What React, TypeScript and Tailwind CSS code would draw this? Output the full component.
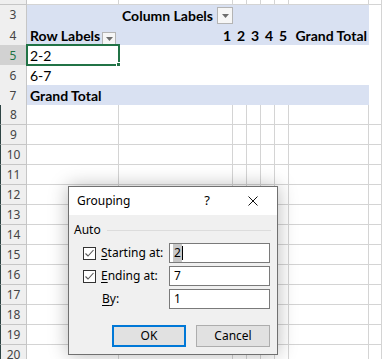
import React from 'react';

const ROWS = [2, 3, 4, 5, 6, 7, 8, 9, 10, 11, 12, 13, 14, 15, 16, 17, 18, 19, 20];
const COLS = ['A', 'B', 'C', 'D', 'E', 'F', 'G', 'H'];
const PIVOT_COLS = ['A', 'B', 'C', 'D', 'E', 'F', 'G'];

const cellFont = { fontFamily: 'Lato, "Liberation Sans", sans-serif' };
const uiFont = { fontFamily: '"Segoe UI", "Noto Sans", "Open Sans", sans-serif' };

function FilterButton({ small }: { small?: boolean }) {
  return (
    <div
      className={
        small
          ? 'flex h-[13px] w-[14px] items-center justify-center border border-[#b4b4b4] bg-[#f6f6f6]'
          : 'flex h-[17px] w-[16px] items-center justify-center border border-[#b4b4b4] bg-[#f6f6f6]'
      }
    >
      <svg width="7" height="4" viewBox="0 0 7 4">
        <path d="M0 0 H7 L3.5 4 Z" fill="#6d6d6d" />
      </svg>
    </div>
  );
}

function cellText(row: number, col: string) {
  const bold = 'font-bold text-[14px] text-black';
  const normal = 'text-[14px] text-black';
  if (row === 3 && col === 'B') {
    return (
      <div className="flex h-full items-center justify-between pl-[3px]">
        <span className={bold}>Column Labels</span>
        <FilterButton />
      </div>
    );
  }
  if (row === 4 && col === 'A') {
    return (
      <div className="flex h-full items-end justify-between pb-[1px] pl-[3px] pr-[3px]">
        <span className={bold}>Row Labels</span>
        <div className="mb-[1px]">
          <FilterButton small />
        </div>
      </div>
    );
  }
  if (row === 4) {
    const labels: Record<string, string> = { B: '1', C: '2', D: '3', E: '4', F: '5', G: 'Grand Total' };
    if (labels[col]) {
      return (
        <div className="flex h-full items-end justify-end pb-[1px] pr-[2px]">
          <span className={bold}>{labels[col]}</span>
        </div>
      );
    }
  }
  if (col === 'A' && (row === 5 || row === 6 || row === 7)) {
    const t = row === 5 ? '2-2' : row === 6 ? '6-7' : 'Grand Total';
    return (
      <div className="flex h-full items-end pb-[1px] pl-[3px]">
        <span className={row === 7 ? bold : normal}>{t}</span>
      </div>
    );
  }
  return null;
}

function Cell({ row, col }: { row: number; col: string }) {
  const inPivot = row >= 3 && row <= 7 && PIVOT_COLS.includes(col);
  let cls = 'min-w-0 overflow-visible whitespace-nowrap';
  if (inPivot) {
    const band = row === 3 || row === 4 || row === 7;
    cls += band ? ' bg-[#d9e1f2]' : ' bg-white';
    if (row === 4 || row === 6) cls += ' border-b border-[#8ea9db]';
    else if (row === 7) cls += ' border-b border-[#d4d4d4]';
  } else {
    cls += ' bg-white border-b border-r border-[#d4d4d4]';
  }
  return <div className={cls}>{cellText(row, col)}</div>;
}

function Sheet() {
  return (
    <div className="flex flex-col" style={cellFont}>
      {ROWS.map((r) => (
        <div
          key={r}
          className={
            (r === 2 ? 'h-[5px] ' : 'h-[20px] ') +
            'grid shrink-0 grid-cols-[27px_92px_114px_14px_14px_14px_14px_80px_1fr]'
          }
        >
          <div
            className={
              'flex items-center justify-center border-b border-r border-[#c6c6c6] text-[12px] ' +
              (r === 5 ? 'bg-[#d2d2d2] text-[#217346] ' : 'bg-[#efefef] text-[#444] ') +
              (r >= 8 ? 'border-l border-l-[#2f4545]' : '')
            }
            style={uiFont}
          >
            {r === 2 ? '' : r}
          </div>
          {COLS.map((c) => (
            <Cell key={c} row={r} col={c} />
          ))}
        </div>
      ))}
    </div>
  );
}

function Checkbox() {
  return (
    <div className="flex h-[13px] w-[13px] items-center justify-center border border-[#333] bg-white">
      <svg width="11" height="11" viewBox="0 0 11 11">
        <path d="M1.5 5.5 L4 8 L9.5 2" fill="none" stroke="#555" strokeWidth="1.1" />
      </svg>
    </div>
  );
}

function Field({ label, accel, rest, value, checked, selected }: {
  label?: string; accel: string; rest: string; value: string; checked: boolean; selected?: boolean;
}) {
  return (
    <div className="flex h-[20px] items-center">
      <div className="flex w-[86px] items-center">
        {checked ? (
          <>
            <Checkbox />
            <span className="ml-[5px] text-[12px] text-black">
              <span className="underline underline-offset-2">{accel}</span>
              {rest}
            </span>
          </>
        ) : (
          <span className="ml-[19px] text-[12px] text-black">
            <span className="underline underline-offset-2">{accel}</span>
            {rest}
          </span>
        )}
      </div>
      <div className="flex h-[20px] w-[101px] items-center border border-[#7a7a7a] bg-white pl-[3px] text-[12px] text-black">
        {selected ? (
          <>
            <span className="bg-[#c8c8c8] px-[1px]">{value}</span>
            <span className="h-[14px] w-px bg-black" />
          </>
        ) : (
          <span className="pl-[1px]">{value}</span>
        )}
      </div>
      {label}
    </div>
  );
}

function GroupingDialog() {
  return (
    <div
      className="absolute left-[68px] top-[186px] flex h-[169px] w-[210px] flex-col border border-[#707070] bg-[#f0f0f0] shadow-[0_0_18px_rgba(0,0,0,0.28)]"
      style={uiFont}
    >
      <div className="flex h-[28px] shrink-0 items-center bg-white pl-[8px] text-[12px] text-black">
        <span className="flex-1">Grouping</span>
        <span className="mr-[38px] text-[13px]">?</span>
        <svg className="mr-[19px]" width="10" height="10" viewBox="0 0 10 10">
          <path d="M0.5 0.5 L9.5 9.5 M9.5 0.5 L0.5 9.5" stroke="#111" strokeWidth="1" />
        </svg>
      </div>
      <div className="flex flex-1 flex-col pl-[5px] pr-[6px] pt-[7px]">
        <div className="flex h-[16px] items-center text-[12px] text-black">
          <span>Auto</span>
          <div className="ml-[6px] h-px flex-1 bg-[#dcdcdc]" />
        </div>
        <div className="mt-[5px] flex flex-col gap-[3px] pl-[9px]">
          <Field accel="S" rest="tarting at:" value="2" checked selected />
          <Field accel="E" rest="nding at:" value="7" checked />
          <Field accel="B" rest="y:" value="1" checked={false} />
        </div>
        <div className="mt-[16px] flex gap-[10px] pl-[38px]">
          <button className="h-[22px] w-[74px] border-2 border-[#0078d7] bg-[#e1e1e1] text-[12px] text-black">
            OK
          </button>
          <button className="h-[22px] w-[74px] border border-[#adadad] bg-[#e1e1e1] text-[12px] text-black">
            Cancel
          </button>
        </div>
      </div>
    </div>
  );
}

export default function App() {
  return (
    <div className="relative h-[359px] w-[382px] overflow-hidden bg-white">
      <Sheet />
      {/* active cell A5 */}
      <div className="absolute left-[26px] top-[44px] h-[22px] w-[94px] border-2 border-[#217346]" />
      <div className="absolute left-[116px] top-[62px] h-[5px] w-[5px] border border-white bg-[#217346]" />
      <GroupingDialog />
    </div>
  );
}
